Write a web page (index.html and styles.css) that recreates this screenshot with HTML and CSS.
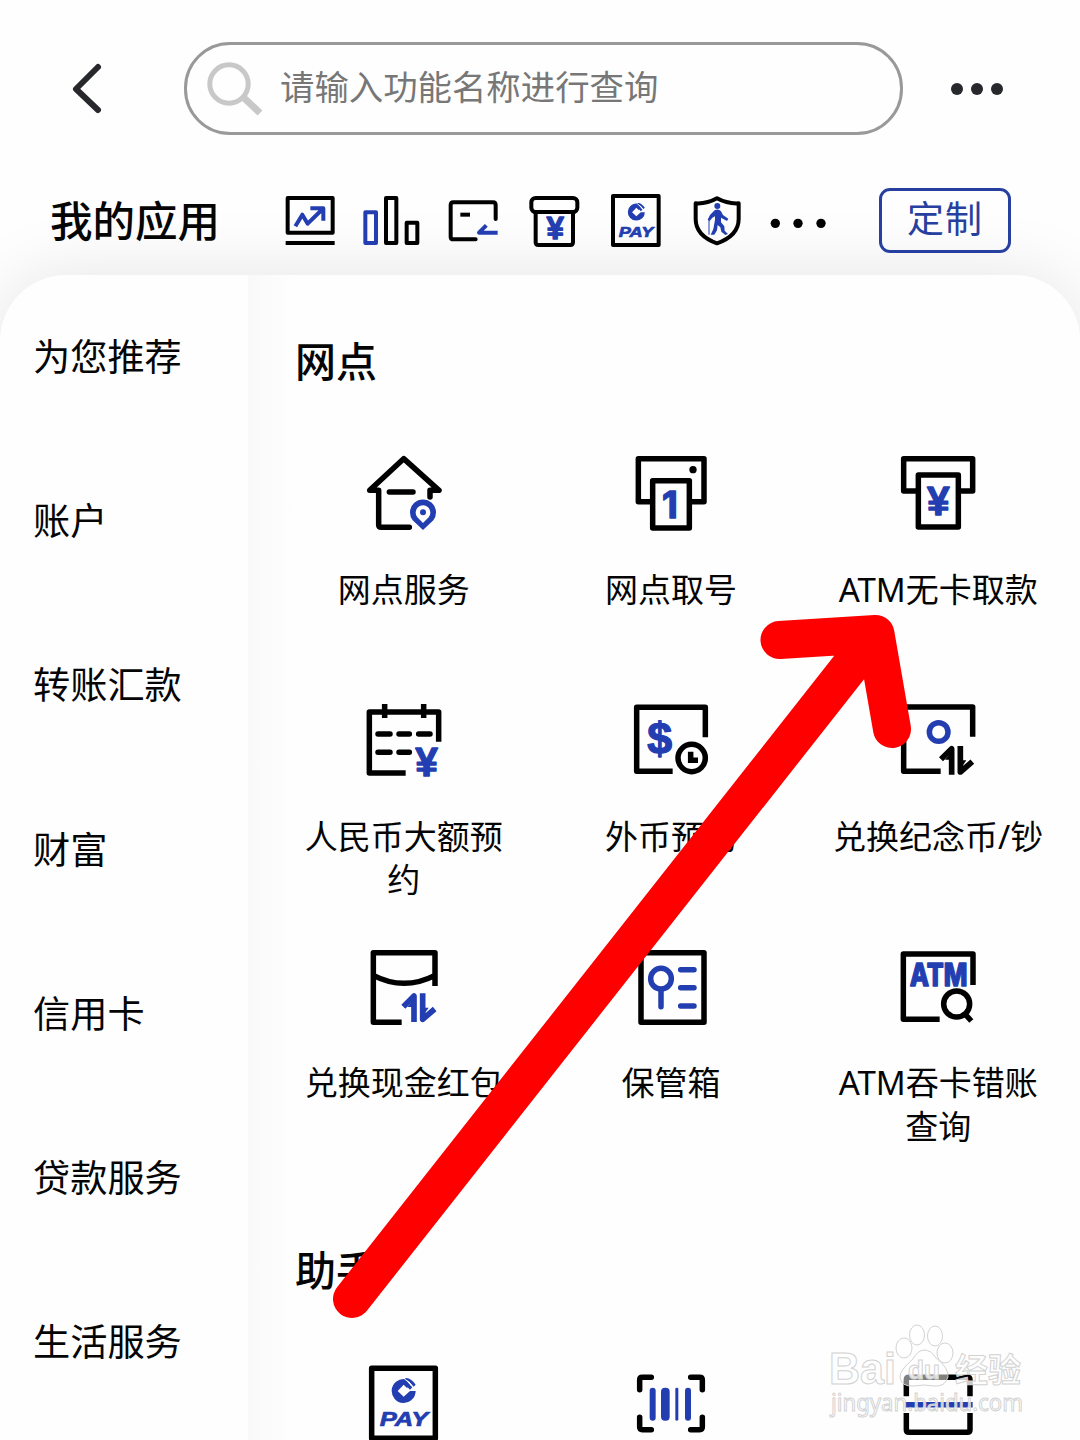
FILE: index.html
```html
<!DOCTYPE html>
<html lang="zh-CN">
<head>
    <meta charset="UTF-8">
    <meta name="viewport" content="width=device-width, initial-scale=1.0">
    <title>全部应用</title>
    <link rel="stylesheet" href="styles.css">
</head>
<body>
    <!-- общие фигуры -->
    <svg class="defs" width="0" height="0">
        <symbol id="logo" viewBox="0 0 76 76">
            <path fill="#233eb1" fill-rule="evenodd" d="M42 4A36 36 0 1 0 74 40H57L38 57L20 40L38 21L48 31L57 22Z"/>
            <path fill="#233eb1" d="M46 1Q60 1 74 21L68 27Q57 11 41 3ZM39 5L64 29L57 36L34 12Z"/>
            <path stroke="#fff" stroke-width="2.5" fill="none" d="M40 4Q54 11 65 27"/>
        </symbol>
        <symbol id="swap" viewBox="0 0 110 100">
            <path fill="none" stroke="currentColor" stroke-width="17" stroke-linejoin="round" d="M8 47L40 15V93M66 7V85L102 54"/>
            <path fill="currentColor" d="M20 48L40 24V48ZM66 50H84L66 76Z"/>
        </symbol>
    </svg>

    <header class="header">
        <svg class="back" width="40" height="60" viewBox="0 0 40 60"><path d="M30 8L8 30L30 51"/></svg>
        <div class="search">
            <svg width="60" height="60" viewBox="0 0 60 60"><circle cx="25" cy="25" r="19.2"/><path d="M39 38L56 54"/></svg>
            <span>请输入功能名称进行查询</span>
        </div>
        <div class="more"><i></i><i></i><i></i></div>
    </header>

    <section class="my-apps">
        <h2>我的应用</h2>
        <div class="mini-icons">
            <svg viewBox="0 0 180 180"><rect x="23" y="21" width="135" height="104"/><path d="M17 156H164"/><path class="blue" d="M46 106L67 71L83 98L128 54M91 52H130V89"/></svg>
            <svg viewBox="0 0 180 180"><rect class="blue" x="10" y="64" width="32" height="92"/><rect x="72" y="21" width="31" height="135"/><rect x="134" y="95" width="32" height="61"/></svg>
            <svg viewBox="0 0 180 180"><path class="round" d="M158 84V42Q158 34 150 34H31Q23 34 23 42V137Q23 145 31 145H98"/><path d="M52 71H81"/><path class="blue" d="M130 103L108 125H164"/></svg>
            <svg viewBox="0 0 180 180"><path d="M35 63V154Q35 162 43 162H139Q147 162 147 154V63"/><rect x="22" y="21" width="138" height="42" rx="13"/><text class="sign" x="94" y="145" font-size="94">¥</text></svg>
            <svg viewBox="0 0 180 180"><rect x="21" y="15" width="137" height="147"/><use href="#logo" x="64" y="34" width="54" height="56"/><text class="pay" x="38" y="138" font-size="43" textLength="104" lengthAdjust="spacingAndGlyphs">PAY</text></svg>
            <svg viewBox="0 0 180 180"><path d="M90 22Q60 39 26 37V84Q26 134 90 157Q155 134 155 84V37Q121 39 90 22Z"/><circle class="fill-blue" cx="91" cy="45" r="9"/><path class="fill-blue" d="M83 58Q94 52 102 61L108 72L124 83L120 90L102 80V94L112 106L113 119L123 129L115 132L103 122L100 109L92 102L90 118L82 131H71L79 114L84 86V76L76 80L68 90L62 86L69 72Z"/><path class="cane" d="M66 131V90Q64 82 69 81"/></svg>
            <svg class="dots" viewBox="0 0 180 180"><circle cx="19" cy="97" r="14"/><circle cx="87" cy="97" r="14"/><circle cx="156" cy="97" r="14"/></svg>
        </div>
        <button class="custom-button">定制</button>
    </section>

    <main class="panel">
        <nav class="sidebar">
            <a>为您推荐</a>
            <a>账户</a>
            <a>转账汇款</a>
            <a>财富</a>
            <a>信用卡</a>
            <a>贷款服务</a>
            <a>生活服务</a>
        </nav>
        <div class="content">
            <h3>网点</h3>
            <div class="grid">
                <div class="item">
                    <svg viewBox="0 0 240 240"><path class="round" d="M36 112H17L119 17L225 112H198V132M36 112H44V215Q44 223 52 223H136M76 117H147"/><path class="fill-blue" d="M177 231L146 202A39 39 0 1 1 208 202Z"/><path class="fill-white" d="M177 210L160 193A22 22 0 1 1 194 193Z"/><circle class="fill-blue" cx="177" cy="178" r="9"/></svg>
                    <p>网点服务</p>
                </div>
                <div class="item">
                    <svg viewBox="0 0 240 240"><rect x="22" y="17" width="197" height="129"/><circle class="fill-black" cx="186" cy="50" r="11"/><rect class="paper" x="65" y="83" width="110" height="142"/><text class="sign one" x="117" y="195" font-size="110">1</text></svg>
                    <p>网点取号</p>
                </div>
                <div class="item">
                    <svg viewBox="0 0 240 240"><rect x="17" y="17" width="207" height="97"/><rect class="paper" x="61" y="66" width="120" height="156"/><text class="sign" x="121" y="187" font-size="122">¥</text></svg>
                    <p>ATM无卡取款</p>
                </div>
                <div class="item">
                    <svg viewBox="0 0 240 240"><path d="M224 125V36H16V219H125M62 12V54M179 12V54"/><path class="round" d="M42 102H78M105 102H136M164 102H198M42 157H78M105 157H136"/><text class="sign" x="188" y="227" font-size="122">¥</text></svg>
                    <p>人民币大额预约</p>
                </div>
                <div class="item">
                    <svg viewBox="0 0 240 240"><path d="M223 112V22H17V214H125"/><text class="sign" x="86" y="163" font-size="134">$</text><circle cx="182" cy="174" r="41"/><path class="miter" d="M179 155V181H201"/></svg>
                    <p>外币预约</p>
                </div>
                <div class="item">
                    <svg viewBox="0 0 240 240"><path d="M224 110V21H17V214H128"/><circle class="blue" cx="122" cy="96" r="28"/><use href="#swap" x="121" y="131" width="110" height="100"/></svg>
                    <p>兑换纪念币/钞</p>
                </div>
                <div class="item">
                    <svg viewBox="0 0 240 240"><path d="M213 120V20H28V229H113M28 88Q120 136 213 88"/><use class="swap-blue" href="#swap" x="110" y="135" width="110" height="100"/></svg>
                    <p>兑换现金红包</p>
                </div>
                <div class="item">
                    <svg viewBox="0 0 240 240"><rect x="30" y="20" width="189" height="209"/><circle class="blue" cx="90" cy="98" r="31"/><path class="blue round" d="M90 132V182M149 71H189M149 125H189M149 180H189"/></svg>
                    <p>保管箱</p>
                </div>
                <div class="item">
                    <svg viewBox="0 0 240 240"><path d="M225 117V24H16V220H125"/><text class="atm" x="35" y="120" font-size="92" textLength="173" lengthAdjust="spacingAndGlyphs">ATM</text><circle cx="176" cy="174" r="39"/><path d="M201 204L220 225"/></svg>
                    <p>ATM吞卡错账查询</p>
                </div>
            </div>
            <h3>助手</h3>
            <div class="grid">
                <div class="item">
                    <svg viewBox="0 0 240 240"><rect x="23" y="16" width="191" height="210"/><use href="#logo" x="81" y="42" width="76" height="80"/><text class="pay" x="47" y="190" font-size="58" textLength="146" lengthAdjust="spacingAndGlyphs">PAY</text></svg>
                </div>
                <div class="item">
                    <svg viewBox="0 0 240 240"><path class="round" d="M61 43H34Q26 43 26 51V80M179 43H206Q214 43 214 51V80M61 200H34Q26 200 26 192V163M179 200H206Q214 200 214 192V163"/><g class="fill-blue"><rect x="56" y="74" width="18" height="99" rx="9"/><rect x="90" y="74" width="26" height="99" rx="12"/><rect x="133" y="74" width="9" height="99" rx="4"/><rect x="162" y="74" width="18" height="99" rx="9"/></g></svg>
                </div>
                <div class="item">
                    <svg viewBox="0 0 240 240"><path d="M25 100V51Q25 43 33 43H208Q216 43 216 51V100M25 150V200Q25 208 33 208H208Q216 208 216 200V150"/><path class="blue" d="M20 125H224"/></svg>
                </div>
            </div>
        </div>
    </main>

    <!-- водяной знак -->
    <svg class="watermark" width="210" height="100" viewBox="0 0 210 100">
        <ellipse cx="80" cy="28" rx="8" ry="10"/>
        <ellipse cx="93" cy="15" rx="7.5" ry="10"/>
        <ellipse cx="111" cy="16" rx="7.5" ry="10"/>
        <ellipse cx="121" cy="33" rx="8" ry="10"/>
        <path class="palm" d="M100 30Q107 30 112 38Q125 48 124 57Q121 67 110 66Q100 64 90 66Q77 67 76 57Q76 50 88 40Q94 30 100 30Z"/>
        <text class="bold" x="5" y="64" font-size="44" textLength="67" lengthAdjust="spacingAndGlyphs">Bai</text>
        <text class="bold" x="84" y="59" font-size="26" textLength="32" lengthAdjust="spacingAndGlyphs">du</text>
        <text class="bold" x="131" y="62" font-size="33" textLength="66">经验</text>
        <text x="7" y="91" font-size="24" textLength="192" lengthAdjust="spacingAndGlyphs">jingyan.baidu.com</text>
    </svg>

    <!-- стрелка-указатель -->
    <svg class="pointer" width="1080" height="1440" viewBox="0 0 1080 1440">
        <path d="M352 1299L875.500 634M779.500 640L875.500 634L892 729"/>
    </svg>
</body>
</html>
```

FILE: styles.css
```css
* {
    box-sizing: border-box;
}
body {
    position: relative;
    width: 1080px;
    height: 1440px;
    margin: 0;
    overflow: hidden;
    background: #fefefe;
    color: #050505;
    font-family: "Noto Sans", "Noto Sans CJK SC", sans-serif;
}
h2, h3, p {
    margin: 0;
}
.defs {
    position: absolute;
}
.header {
    display: flex;
    align-items: center;
    height: 135px;
    padding: 42px 0 0 68px;
}
.back {
    fill: none;
    stroke: #26282b;
    stroke-width: 6;
    stroke-linecap: round;
    stroke-linejoin: round;
}
.search {
    display: flex;
    align-items: center;
    width: 719px;
    height: 93px;
    margin-left: 76px;
    padding-left: 17px;
    border: 3px solid #999;
    border-radius: 46px;
    color: #777;
    font-size: 34.4px;
    line-height: 50px;
}
.search svg {
    fill: none;
    stroke: #c8c8c8;
    stroke-width: 5;
}
.search path {
    stroke-width: 7;
}
.search span {
    margin: -3px 0 0 16px;
}
.more {
    display: flex;
    gap: 8px;
    margin: 1px 0 0 48px;
}
.more i {
    width: 12px;
    height: 12px;
    border-radius: 50%;
    background: #26282b;
}
.my-apps {
    display: flex;
    align-items: center;
    height: 140px;
    padding: 32px 0 0 50px;
    position: relative;
    z-index: 1;
}
.my-apps h2 {
    width: 230.3px;
    font-size: 42.5px;
    font-weight: 500;
    line-height: 60px;
}
.mini-icons {
    display: flex;
    gap: 21.4px;
}
.mini-icons svg {
    width: 60px;
    height: 60px;
    fill: none;
    stroke: #000;
    stroke-width: 12;
    stroke-linejoin: round;
}
.mini-icons .dots {
    fill: #000;
    stroke: none;
}
.mini-icons .cane {
    stroke: #233eb1;
    stroke-width: 3;
}
.custom-button {
    width: 132px;
    height: 65px;
    margin: -2px 0 0 50.3px;
    padding: 0 0 2px;
    border: 3px solid #27409f;
    border-radius: 11px;
    background: none;
    color: #27409f;
    font-family: inherit;
    font-size: 37px;
    line-height: 54px;
    letter-spacing: 1px;
}
.panel {
    display: flex;
    height: 1165px;
    overflow: hidden;
    border-radius: 66px 66px 0 0;
    background: #fefefe;
    box-shadow: 0 0 70px rgba(0, 0, 0, 0.1);
}
.sidebar {
    width: 248px;
    padding: 0 0 0 33px;
}
.sidebar a {
    display: block;
    height: 164.2px;
    font-size: 37.2px;
    line-height: 164.2px;
}
.content {
    flex: 1;
    padding: 56px 0 0 22px;
    background: linear-gradient(to right, #f9f9f9, #fefefe 46px);
}
.content h3 {
    padding-left: 25px;
    font-size: 41px;
    font-weight: 500;
    line-height: 60px;
}
.grid {
    display: grid;
    grid-template-columns: repeat(3, 267.3px);
    grid-auto-rows: 246.5px;
    padding-top: 62px;
}
.item {
    display: flex;
    flex-direction: column;
    align-items: center;
}
.item svg {
    width: 80px;
    height: 80px;
    flex: none;
    overflow: visible;
    fill: none;
    stroke: #000;
    stroke-width: 16.5;
    stroke-linejoin: round;
}
.item p {
    width: 216px;
    margin-top: 35px;
    font-size: 33px;
    line-height: 43.5px;
    text-align: center;
}
.grid + h3 {
    margin-top: 47px;
}
.grid + h3 + .grid {
    padding-top: 63px;
}
.round {
    stroke-linecap: round;
}
svg .blue {
    stroke: #233eb1;
}
svg .fill-blue {
    fill: #233eb1;
    stroke: none;
}
svg .fill-white {
    fill: #fff;
    stroke: none;
}
svg .fill-black {
    fill: #000;
    stroke: none;
}
svg .paper {
    fill: #fefefe;
}
svg .miter {
    stroke-linejoin: miter;
}
.swap-blue {
    color: #233eb1;
}
use {
    stroke: none;
}
.sign, .pay, .atm {
    fill: #233eb1;
    stroke: #233eb1;
    stroke-width: 4;
    font-family: "Liberation Sans", sans-serif;
    font-weight: bold;
}
.sign {
    text-anchor: middle;
}
.one {
    font-family: "Inter", sans-serif;
}
.pay {
    font-style: italic;
    stroke-width: 2;
}
.atm {
    font-family: "Inter", sans-serif;
    font-weight: 800;
}
.watermark {
    position: absolute;
    left: 824px;
    top: 1320px;
    fill: rgba(255, 255, 255, 0.8);
    stroke: #d2d2d2;
    stroke-width: 1;
}
.watermark .palm {
    fill: rgba(255, 255, 255, 0.5);
}
.watermark .bold {
    font-family: "Liberation Sans", "Noto Sans CJK SC", sans-serif;
    font-weight: bold;
}
.pointer {
    position: absolute;
    left: 0;
    top: 0;
    fill: none;
    stroke: #fe0000;
    stroke-width: 38;
    stroke-linecap: round;
    stroke-linejoin: round;
}
```
